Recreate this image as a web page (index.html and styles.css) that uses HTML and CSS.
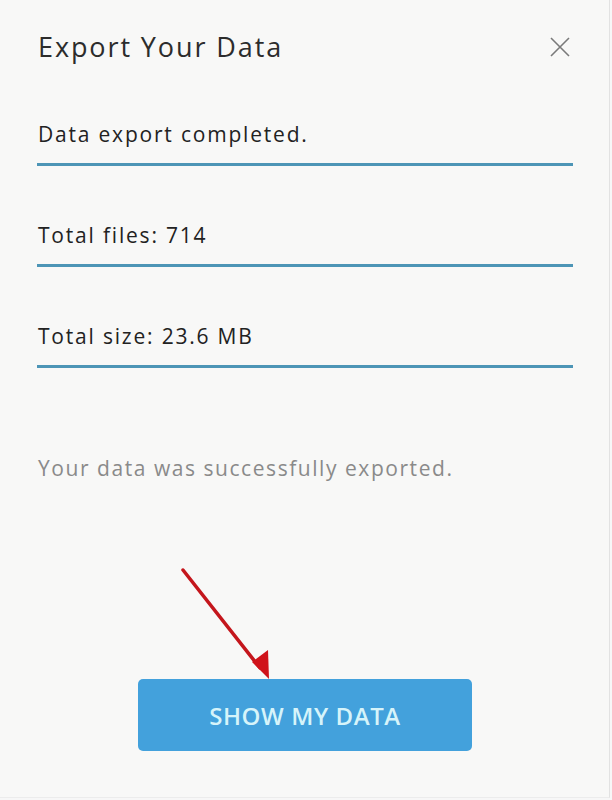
FILE: index.html
```html
<!doctype html>
<html lang="en">
<head>
	<meta charset="UTF-8">
	<title>Export Your Data</title>
	<link rel="stylesheet" href="styles.css">
</head>
<body>
	<div class="dialog">
		<div class="dialog-head">
			<h1 class="dialog-title">Export Your Data</h1>
			<a href="javascript:;" class="dialog-close" title="Close">
				<svg width="20" height="20" viewBox="0 0 20 20"><path d="M1 1L19 19M19 1L1 19" stroke="#7a7a7a" stroke-width="1.6" fill="none"/></svg>
			</a>
		</div>
		<div class="row">Data export completed.</div>
		<div class="row">Total files: 714</div>
		<div class="row">Total size: 23.6 MB</div>
		<p class="status">Your data was successfully exported.</p>
		<div class="actions">
			<a href="javascript:;" class="btn">SHOW MY DATA</a>
		</div>
		<!-- annotation arrow -->
		<svg class="arrow" width="120" height="130" viewBox="0 0 120 130">
			<line x1="3" y1="4" x2="80" y2="102" stroke="#c4161c" stroke-width="3.5" stroke-linecap="round"/>
			<path d="M72 96L88 84L89 113Z" fill="#d0131a"/>
		</svg>
	</div>
</body>
</html>
```

FILE: styles.css
```css
* { padding: 0; margin: 0; box-sizing: border-box; }
body { background: #f7f7f7; font-family: "Open Sans", "Noto Sans", sans-serif; color: #222; }
.dialog { position: relative; width: 610px; height: 798px; padding: 29px 36px 0 37px; background: #f8f8f7; border-right: 1px solid #e2e2e2; border-bottom: 1px solid #ececec; }
.dialog-head { display: flex; justify-content: space-between; align-items: center; height: 36px; }
.dialog-title { font-size: 27px; font-weight: 400; line-height: 36px; letter-spacing: 1.9px; color: #2c2c2c; padding-left: 1px; }
.dialog-close { display: flex; margin-right: 3px; }
.row { margin-top: 55px; padding: 0 1px 15px; font-size: 21px; line-height: 28px; letter-spacing: 1.8px; border-bottom: 3px solid #4d95b6; }
.status { margin-top: 86px; padding-left: 1px; font-size: 21px; line-height: 28px; letter-spacing: 1.55px; color: #8a8a8a; }
.actions { display: flex; justify-content: center; margin-top: 197px; }
.btn { display: flex; align-items: center; justify-content: center; width: 334px; height: 72px; border-radius: 5px; background: #43a1dc; color: #d6f4fa; font-size: 24px; font-weight: 600; letter-spacing: 0.6px; text-decoration: none; }
.arrow { position: absolute; left: 180px; top: 566px; }
```
